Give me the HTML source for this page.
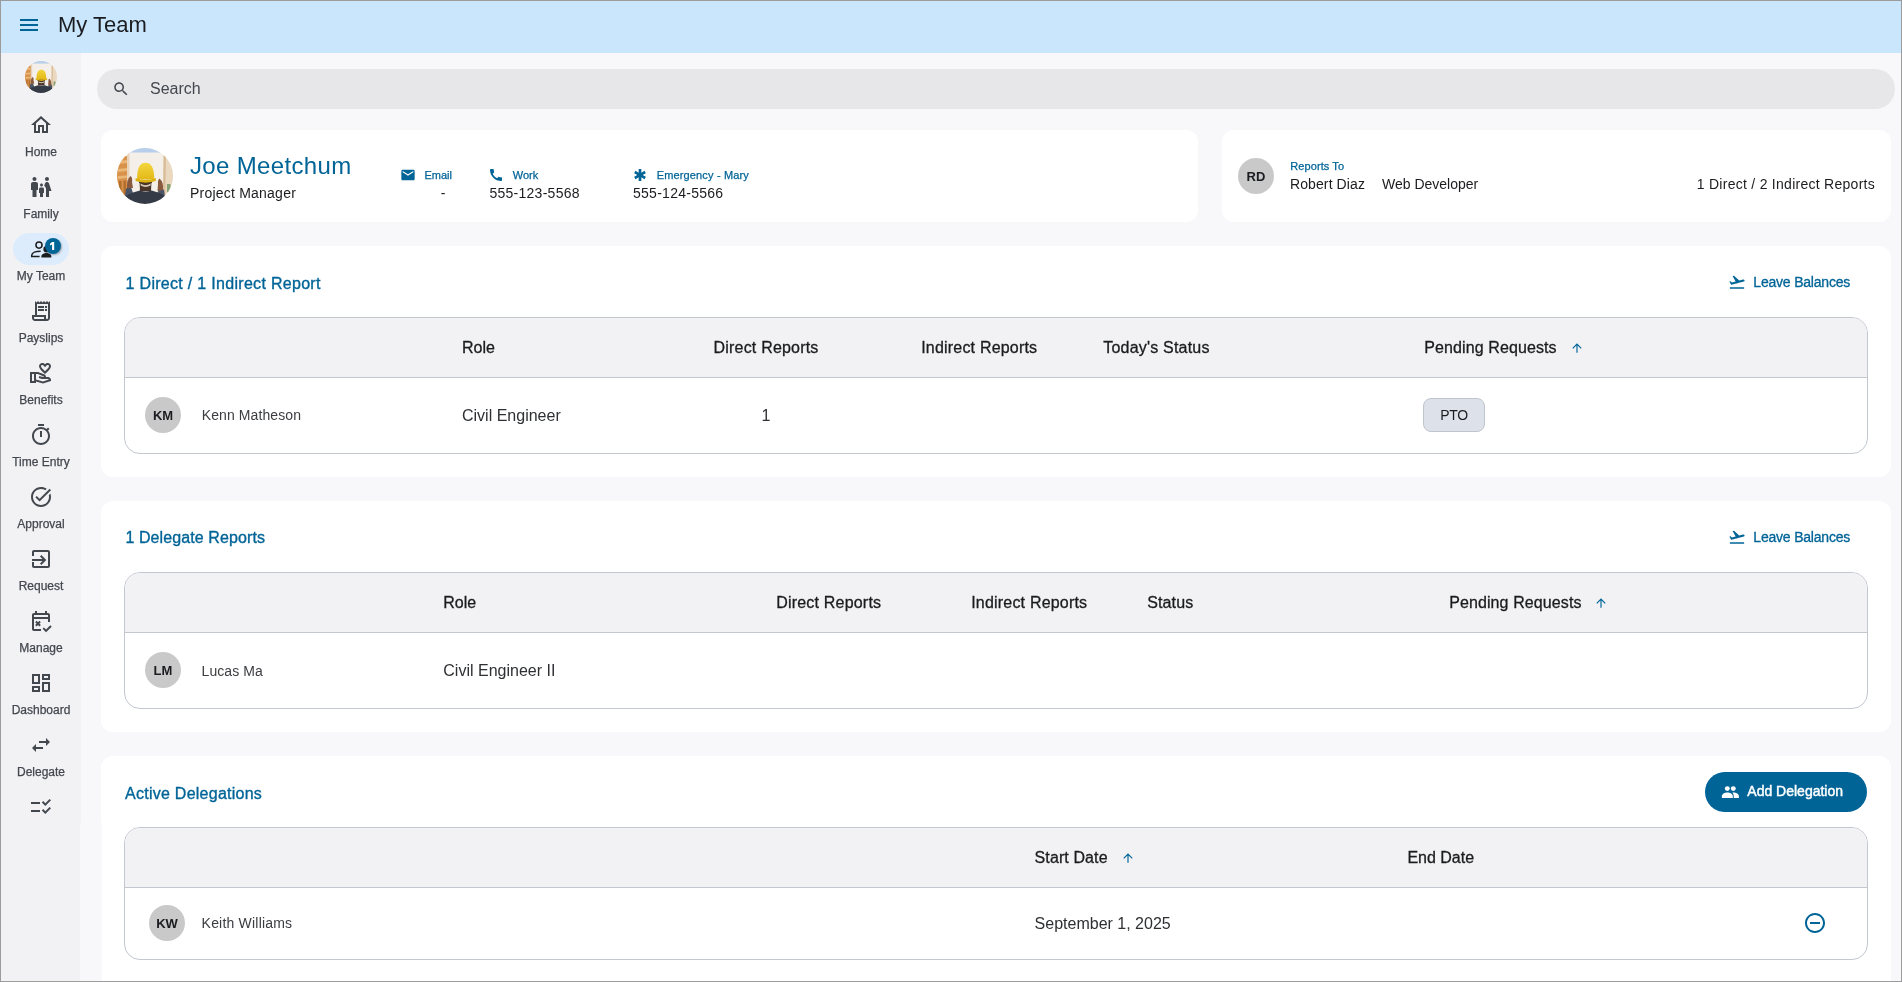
<!DOCTYPE html>
<html><head><meta charset="utf-8"><title>My Team</title>
<style>
html,body{margin:0;padding:0;}
body{width:1902px;height:982px;position:relative;overflow:hidden;background:#fff;font-family:"Liberation Sans",sans-serif;}
.t{position:absolute;white-space:nowrap;line-height:1;}
.av{position:absolute;width:36px;height:36px;border-radius:18px;background:#c9c9c9;color:#1b1c1f;font:bold 13px/37px "Liberation Sans",sans-serif;text-align:center;}
#frame{position:absolute;left:0;top:0;width:1900px;height:980px;border:1px solid #9c9c9c;pointer-events:none;z-index:10;}
</style></head><body>
<div id="root" style="position:absolute;left:0;top:0;width:1902px;height:982px;will-change:transform;">
<div style="position:absolute;left:0px;top:0px;width:1902px;height:53px;background:#c9e6fd;"></div>
<svg style="position:absolute;left:17px;top:13px;" width="24" height="24" viewBox="0 0 24 24"><path fill="#006497" d="M3 18h18v-2H3v2zm0-5h18v-2H3v2zm0-7v2h18V6H3z"/></svg>
<div class="t" style="left:58.00px;top:13.78px;font-size:22px;color:#1b1c1f;">My Team</div>
<div style="position:absolute;left:0px;top:53px;width:81px;height:929px;background:#f2f2f5;"></div>
<svg style="position:absolute;left:25px;top:61px" width="32" height="32" viewBox="0 0 56 56">
<defs><clipPath id="ca"><circle cx="28" cy="28" r="28"/></clipPath>
<linearGradient id="ha" x1="0" y1="0" x2="0" y2="1"><stop offset="0" stop-color="#f4d63e"/><stop offset="1" stop-color="#e3b817"/></linearGradient></defs>
<g clip-path="url(#ca)">
<rect width="56" height="56" fill="#f4efe8"/>
<rect x="0" y="0" width="56" height="4.5" fill="#b7cfea"/>
<path d="M0 9 L10.5 8 L10.5 48 L0 48Z" fill="#d8924a"/>
<path d="M1 13 L10 12 L10 15 L1 16Z M1 21 L10 20 L10 23 L1 24Z M1 28 L10 27.5 L10 30 L1 31Z" fill="#eab777"/>
<path d="M2 33 L4.5 33 L4.5 48 L2 48Z M6.5 32.5 L9 32.5 L9 48 L6.5 48Z" fill="#b26f2e"/>
<path d="M10 5 L12.5 5 L12.5 48 L10 48Z" fill="#e7d3bb"/>
<path d="M48.5 7 L56 9 L56 48 L48.5 48Z" fill="#ead9c0"/>
<path d="M46.5 6 L49 6.5 L48.5 47 L46 47Z" fill="#d9bc98"/>
<path d="M50 36 L53.5 36 L53.5 44 L50 44Z" fill="#86a174"/>
<path d="M7 56 L9 41 Q11 38 14 39 L16 45 L15 56Z" fill="#4a5568"/>
<path d="M49 56 L47 42 Q45 40 42 41 L40 46 L41 56Z" fill="#4a5568"/>
<path d="M10 40 Q9.5 31 13.5 28 Q15.8 29.5 15 34 L16 40Z" fill="#8a5a3e"/>
<path d="M46 42 Q46.8 34 42.5 30.5 Q40.5 32 41 36 L40.5 43Z" fill="#8a5a3e"/>
<path d="M22.5 33 L34.5 33 L34 43 L23 43Z" fill="#4a3328"/>
<path d="M22 32 L35 32 L34.8 35 L22.2 35Z" fill="#2a1f1a"/>
<path d="M23.5 35.5 Q28.6 39 33.8 35.5 L33.6 37.6 Q28.6 40.5 23.7 37.6Z" fill="#d9cbb8"/>
<path d="M20.2 31.5 Q19.6 15 28.6 14.8 Q37.6 15 37.2 31.5Z" fill="url(#ha)"/>
<path d="M18.6 30 Q28.6 34 38.8 30 L38.8 33 Q28.6 36.6 18.6 33Z" fill="#dcb114"/>
<path d="M3 56 Q7 47 16 44.5 L23 42.5 Q28.6 44.5 34.5 42.5 L41 44.5 Q50 47 53 56Z" fill="#343b46"/>
</g></svg>
<svg style="position:absolute;left:29px;top:113px;" width="24" height="24" viewBox="0 0 24 24"><path fill="#43474e" d="M12 5.69l5 4.5V18h-2v-6H9v6H7v-7.81l5-4.5M12 3L2 12h3v8h6v-6h2v6h6v-8h3L12 3z"/></svg>
<div class="t" style="left:-59.00px;width:200px;text-align:center;top:145.84px;font-size:12px;color:#43474e;-webkit-text-stroke:0.25px #43474e;">Home</div>
<svg style="position:absolute;left:29px;top:175px;" width="24" height="24" viewBox="0 0 24 24"><path fill="#43474e" d="M16 4c0-1.11.89-2 2-2s2 .89 2 2-.89 2-2 2-2-.89-2-2zm4 18v-6h2.5l-2.54-7.63C19.68 7.55 18.92 7 18.06 7h-.12c-.86 0-1.63.55-1.9 1.37l-.86 2.58c1.08.6 1.82 1.73 1.82 3.05v8h3zm-7.5-10.5c.83 0 1.5-.67 1.5-1.5s-.67-1.5-1.5-1.5S11 9.17 11 10s.67 1.5 1.5 1.5zM5.5 6c1.11 0 2-.89 2-2s-.89-2-2-2-2 .89-2 2 .89 2 2 2zm2 16v-7H9V9c0-1.1-.9-2-2-2H4c-1.1 0-2 .9-2 2v6h1.5v7h4zm6.5 0v-4h1v-4c0-.82-.68-1.5-1.5-1.5h-2c-.82 0-1.5.68-1.5 1.5v4h1v4h3z"/></svg>
<div class="t" style="left:-59.00px;width:200px;text-align:center;top:207.84px;font-size:12px;color:#43474e;-webkit-text-stroke:0.25px #43474e;">Family</div>
<div style="position:absolute;left:13px;top:233px;width:56px;height:32px;background:#ddecfc;border-radius:16px;"></div>
<svg style="position:absolute;left:25px;top:235px" width="32" height="26" viewBox="25 235 32 26"><g fill="none" stroke="#1b1c1f" stroke-width="1.5"><circle cx="39" cy="245.1" r="3.05"/><path d="M40.6 251.2 C36 251.2 31.7 252.7 31.7 255.4 L31.7 256.6 L39.6 256.6"/></g><g fill="#1b1c1f"><circle cx="46.6" cy="249.3" r="3.2"/><path d="M41.4 257.4 L51.3 257.4 L51.3 256.3 C51.3 254.3 48.7 253 46.4 253 C44.1 253 41.4 254.3 41.4 256.3Z"/></g></svg>
<div class="t" style="left:-59.00px;width:200px;text-align:center;top:269.84px;font-size:12px;color:#43474e;-webkit-text-stroke:0.25px #43474e;">My Team</div>
<svg style="position:absolute;left:29px;top:299px;" width="24" height="24" viewBox="0 0 24 24"><path fill="#43474e" d="M19.5 3.5L18 2l-1.5 1.5L15 2l-1.5 1.5L12 2l-1.5 1.5L9 2 7.5 3.5 6 2v14H3v3c0 1.66 1.34 3 3 3h12c1.66 0 3-1.34 3-3V2l-1.5 1.5zM15 20H6c-.55 0-1-.45-1-1v-1h10v2zm4-1c0 .55-.45 1-1 1s-1-.45-1-1v-3H8V5h11v14zM9 7h6v2H9zm7 0h2v2h-2zm-7 3h6v2H9zm7 0h2v2h-2z"/></svg>
<div class="t" style="left:-59.00px;width:200px;text-align:center;top:331.84px;font-size:12px;color:#43474e;-webkit-text-stroke:0.25px #43474e;">Payslips</div>
<svg style="position:absolute;left:29px;top:361px;" width="24" height="24" viewBox="0 0 24 24"><path fill="#43474e" d="M16 13c3.09-2.81 6-5.44 6-7.7C22 3.45 20.55 2 18.7 2c-1.04 0-2.05.49-2.7 1.25C15.34 2.49 14.34 2 13.3 2 11.45 2 10 3.45 10 5.3c0 2.26 2.91 4.89 6 7.7zm-2.7-9c.44 0 .89.21 1.18.55L16 6.28l1.52-1.73c.29-.34.74-.55 1.18-.55.74 0 1.3.56 1.3 1.3 0 1.12-2.04 3.17-4 4.99-1.96-1.82-4-3.87-4-4.99 0-.74.56-1.3 1.3-1.3zM19 16h-2c0-1.2-.75-2.28-1.87-2.7L8.97 11H1v11h6v-1.44l7 1.94 8-2.5v-1c0-1.66-1.34-3-3-3zM3 20v-7h2v7H3zm10.97.41L7 18.48V13h1.61l5.82 2.17c.34.13.57.46.57.83 0 0-1.99-.05-2.3-.15l-2.38-.79-.63 1.9 2.38.79c.51.17 1.04.26 1.58.26H19c.39 0 .74.23.9.56l-5.93 1.84z"/></svg>
<div class="t" style="left:-59.00px;width:200px;text-align:center;top:393.84px;font-size:12px;color:#43474e;-webkit-text-stroke:0.25px #43474e;">Benefits</div>
<svg style="position:absolute;left:29px;top:423px;" width="24" height="24" viewBox="0 0 24 24"><path fill="#43474e" d="M15 1H9v2h6V1zm-4 13h2V8h-2v6zm8.03-6.61l1.42-1.42c-.43-.51-.9-.99-1.41-1.41l-1.42 1.42C16.07 4.74 14.12 4 12 4c-4.97 0-9 4.03-9 9s4.02 9 9 9 9-4.03 9-9c0-2.12-.74-4.07-1.97-5.61zM12 20c-3.87 0-7-3.13-7-7s3.13-7 7-7 7 3.13 7 7-3.13 7-7 7z"/></svg>
<div class="t" style="left:-59.00px;width:200px;text-align:center;top:455.84px;font-size:12px;color:#43474e;-webkit-text-stroke:0.25px #43474e;">Time Entry</div>
<svg style="position:absolute;left:29px;top:485px;" width="24" height="24" viewBox="0 0 24 24"><path fill="#43474e" d="M22 5.18L10.59 16.6l-4.24-4.24 1.41-1.41 2.83 2.83 10-10L22 5.18zm-2.21 5.04c.13.57.21 1.17.21 1.78 0 4.42-3.58 8-8 8s-8-3.58-8-8 3.58-8 8-8c1.58 0 3.04.46 4.28 1.25l1.44-1.44C16.1 2.67 14.13 2 12 2 6.48 2 2 6.48 2 12s4.48 10 10 10 10-4.48 10-10c0-1.19-.22-2.33-.6-3.39l-1.61 1.61z"/></svg>
<div class="t" style="left:-59.00px;width:200px;text-align:center;top:517.84px;font-size:12px;color:#43474e;-webkit-text-stroke:0.25px #43474e;">Approval</div>
<svg style="position:absolute;left:29px;top:547px;" width="24" height="24" viewBox="0 0 24 24"><path fill="#43474e" d="M19 3H5c-1.11 0-2 .9-2 2v4h2V5h14v14H5v-4H3v4c0 1.1.89 2 2 2h14c1.1 0 2-.9 2-2V5c0-1.1-.9-2-2-2zm-8.01 13.5L12.4 17.9 17.3 13l-4.9-4.9-1.41 1.41L13.47 12H3v2h10.47l-2.48 2.5z"/></svg>
<div class="t" style="left:-59.00px;width:200px;text-align:center;top:579.84px;font-size:12px;color:#43474e;-webkit-text-stroke:0.25px #43474e;">Request</div>
<svg style="position:absolute;left:29px;top:609px;" width="24" height="24" viewBox="0 0 24 24"><path fill="#43474e" d="M19 4h-1V2h-2v2H8V2H6v2H5c-1.11 0-2 .9-2 2v14c0 1.1.89 2 2 2h7v-2H5V10h14v3h2V6c0-1.1-.9-2-2-2zm0 4H5V6h14v2zM7.59 17.41l1.41-1.41 1.41 1.41L11.83 16 10.41 14.59 11.83 13.17 10.41 11.76 9 13.17 7.59 11.76 6.17 13.17 7.59 14.59 6.17 16zM21.3 16.3l-4.24 4.24-2.12-2.12-1.41 1.41 3.53 3.54 5.66-5.66z"/></svg>
<div class="t" style="left:-59.00px;width:200px;text-align:center;top:641.84px;font-size:12px;color:#43474e;-webkit-text-stroke:0.25px #43474e;">Manage</div>
<svg style="position:absolute;left:29px;top:671px;" width="24" height="24" viewBox="0 0 24 24"><path fill="#43474e" d="M19 5v2h-4V5h4M9 5v6H5V5h4m10 8v6h-4v-6h4M9 17v2H5v-2h4M21 3h-8v6h8V3zM11 3H3v10h8V3zm10 8h-8v10h8V11zm-10 4H3v6h8v-6z"/></svg>
<div class="t" style="left:-59.00px;width:200px;text-align:center;top:703.84px;font-size:12px;color:#43474e;-webkit-text-stroke:0.25px #43474e;">Dashboard</div>
<svg style="position:absolute;left:29px;top:733px;" width="24" height="24" viewBox="0 0 24 24"><path fill="#43474e" d="M6.99 11L3 15l3.99 4v-3H14v-2H6.99v-3zM21 9l-3.99-4v3H10v2h7.01v3L21 9z"/></svg>
<div class="t" style="left:-59.00px;width:200px;text-align:center;top:765.84px;font-size:12px;color:#43474e;-webkit-text-stroke:0.25px #43474e;">Delegate</div>
<svg style="position:absolute;left:29px;top:795px;" width="24" height="24" viewBox="0 0 24 24"><path fill="#43474e" d="M11 7H2v2h9V7zm0 8H2v2h9v-2zm5.34-4L12.8 7.46l1.41-1.41 2.12 2.12 4.24-4.24L22 5.34 16.34 11zm0 8l-3.54-3.54 1.41-1.41 2.12 2.12 4.24-4.24L22 13.34 16.34 19z"/></svg>
<div style="position:absolute;left:45px;top:238px;width:16px;height:16px;border-radius:8px;background:#006497;box-shadow:1px 1px 2px rgba(0,0,0,0.3);"></div>
<svg style="position:absolute;left:45px;top:238px" width="16" height="16" viewBox="45 238 16 16"><path fill="#fff" d="M52.1 242 L54.2 242 L54.2 250 L52.1 250 L52.1 244.6 L50 245.4 L50 243.7 Z"/></svg>
<div style="position:absolute;left:81px;top:53px;width:1821px;height:929px;background:#f8f8fb;"></div>
<div style="position:absolute;left:97px;top:69px;width:1798px;height:40px;background:#e7e7ea;border-radius:20px;"></div>
<svg style="position:absolute;left:112px;top:80px;" width="18" height="18" viewBox="0 0 24 24"><path fill="#43474e" d="M15.5 14h-.79l-.28-.27C15.41 12.59 16 11.11 16 9.5 16 5.91 13.09 3 9.5 3S3 5.91 3 9.5 5.91 16 9.5 16c1.61 0 3.09-.59 4.23-1.57l.27.28v.79l5 4.99L20.49 19l-4.99-5zm-6 0C7.01 14 5 11.99 5 9.5S7.01 5 9.5 5 14 7.01 14 9.5 11.99 14 9.5 14z"/></svg>
<div class="t" style="left:150.00px;top:81.06px;font-size:16px;color:#43474e;">Search</div>
<div style="position:absolute;left:101px;top:130px;width:1097px;height:92px;background:#fff;border-radius:12px;"></div>
<svg style="position:absolute;left:117px;top:148px" width="56" height="56" viewBox="0 0 56 56">
<defs><clipPath id="cb"><circle cx="28" cy="28" r="28"/></clipPath>
<linearGradient id="hb" x1="0" y1="0" x2="0" y2="1"><stop offset="0" stop-color="#f4d63e"/><stop offset="1" stop-color="#e3b817"/></linearGradient></defs>
<g clip-path="url(#cb)">
<rect width="56" height="56" fill="#f4efe8"/>
<rect x="0" y="0" width="56" height="4.5" fill="#b7cfea"/>
<path d="M0 9 L10.5 8 L10.5 48 L0 48Z" fill="#d8924a"/>
<path d="M1 13 L10 12 L10 15 L1 16Z M1 21 L10 20 L10 23 L1 24Z M1 28 L10 27.5 L10 30 L1 31Z" fill="#eab777"/>
<path d="M2 33 L4.5 33 L4.5 48 L2 48Z M6.5 32.5 L9 32.5 L9 48 L6.5 48Z" fill="#b26f2e"/>
<path d="M10 5 L12.5 5 L12.5 48 L10 48Z" fill="#e7d3bb"/>
<path d="M48.5 7 L56 9 L56 48 L48.5 48Z" fill="#ead9c0"/>
<path d="M46.5 6 L49 6.5 L48.5 47 L46 47Z" fill="#d9bc98"/>
<path d="M50 36 L53.5 36 L53.5 44 L50 44Z" fill="#86a174"/>
<path d="M7 56 L9 41 Q11 38 14 39 L16 45 L15 56Z" fill="#4a5568"/>
<path d="M49 56 L47 42 Q45 40 42 41 L40 46 L41 56Z" fill="#4a5568"/>
<path d="M10 40 Q9.5 31 13.5 28 Q15.8 29.5 15 34 L16 40Z" fill="#8a5a3e"/>
<path d="M46 42 Q46.8 34 42.5 30.5 Q40.5 32 41 36 L40.5 43Z" fill="#8a5a3e"/>
<path d="M22.5 33 L34.5 33 L34 43 L23 43Z" fill="#4a3328"/>
<path d="M22 32 L35 32 L34.8 35 L22.2 35Z" fill="#2a1f1a"/>
<path d="M23.5 35.5 Q28.6 39 33.8 35.5 L33.6 37.6 Q28.6 40.5 23.7 37.6Z" fill="#d9cbb8"/>
<path d="M20.2 31.5 Q19.6 15 28.6 14.8 Q37.6 15 37.2 31.5Z" fill="url(#hb)"/>
<path d="M18.6 30 Q28.6 34 38.8 30 L38.8 33 Q28.6 36.6 18.6 33Z" fill="#dcb114"/>
<path d="M3 56 Q7 47 16 44.5 L23 42.5 Q28.6 44.5 34.5 42.5 L41 44.5 Q50 47 53 56Z" fill="#343b46"/>
</g></svg>
<div class="t" style="left:190.00px;top:153.68px;font-size:24px;color:#006497;letter-spacing:0.35px;">Joe Meetchum</div>
<div class="t" style="left:190.00px;top:185.85px;font-size:14px;color:#1b1c1f;letter-spacing:0.22px;">Project Manager</div>
<svg style="position:absolute;left:399.6px;top:167px;" width="16" height="16" viewBox="0 0 24 24"><path fill="#006497" d="M20 4H4c-1.1 0-1.99.9-1.99 2L2 18c0 1.1.9 2 2 2h16c1.1 0 2-.9 2-2V6c0-1.1-.9-2-2-2zm0 4l-8 5-8-5V6l8 5 8-5v2z"/></svg>
<div class="t" style="left:424.50px;top:169.69px;font-size:11px;color:#006497;-webkit-text-stroke:0.25px #006497;">Email</div>
<div class="t" style="left:343.00px;width:200px;text-align:center;top:185.75px;font-size:14px;color:#1b1c1f;">-</div>
<svg style="position:absolute;left:488px;top:166.5px;" width="16" height="16" viewBox="0 0 24 24"><path fill="#006497" d="M20.01 15.38c-1.23 0-2.42-.2-3.53-.56-.35-.12-.74-.03-1.01.24l-1.57 1.97c-2.83-1.35-5.48-3.9-6.89-6.83l1.95-1.66c.27-.28.35-.67.24-1.02-.37-1.11-.56-2.3-.56-3.53 0-.54-.45-.99-.99-.99H4.19C3.65 3 3 3.24 3 3.99 3 13.28 10.73 21 20.01 21c.71 0 .99-.63.99-1.18v-3.45c0-.54-.45-.99-.99-.99z"/></svg>
<div class="t" style="left:512.80px;top:169.69px;font-size:11px;color:#006497;-webkit-text-stroke:0.25px #006497;">Work</div>
<div class="t" style="left:489.40px;top:185.75px;font-size:14px;color:#1b1c1f;letter-spacing:0.27px;">555-123-5568</div>
<svg style="position:absolute;left:632px;top:167px;" width="16" height="16" viewBox="0 0 24 24"><path fill="#006497" d="M20.79 9.23l-2-3.46L14 8.54V3h-4v5.54L5.21 5.77l-2 3.46L8 12l-4.79 2.77 2 3.46L10 15.46V21h4v-5.54l4.79 2.77 2-3.46L16 12z"/></svg>
<div class="t" style="left:656.70px;top:169.69px;font-size:11px;color:#006497;letter-spacing:0.15px;-webkit-text-stroke:0.25px #006497;">Emergency - Mary</div>
<div class="t" style="left:633.00px;top:186.15px;font-size:14px;color:#1b1c1f;letter-spacing:0.27px;">555-124-5566</div>
<div style="position:absolute;left:1222px;top:130px;width:669px;height:92px;background:#fff;border-radius:12px;"></div>
<div class="av" style="left:1238px;top:158px">RD</div>
<div class="t" style="left:1290.20px;top:161.19px;font-size:11px;color:#006497;letter-spacing:0.1px;-webkit-text-stroke:0.25px #006497;">Reports To</div>
<div class="t" style="left:1290.00px;top:177.15px;font-size:14px;color:#1b1c1f;letter-spacing:0.1px;">Robert Diaz</div>
<div class="t" style="left:1382.00px;top:177.15px;font-size:14px;color:#1b1c1f;">Web Developer</div>
<div class="t" style="right:27.00px;top:177.15px;font-size:14px;color:#1b1c1f;letter-spacing:0.27px;">1 Direct / 2 Indirect Reports</div>
<div style="position:absolute;left:101px;top:246px;width:1790px;height:231px;background:#fff;border-radius:12px;"></div>
<div class="t" style="left:125.60px;top:275.56px;font-size:16px;color:#006497;letter-spacing:0.3px;-webkit-text-stroke:0.35px #006497;">1 Direct / 1 Indirect Report</div>
<svg style="position:absolute;left:1727.5px;top:273.2px;" width="18" height="18" viewBox="0 0 24 24"><path fill="#006497" d="M2.5 19h19v2h-19v-2zm19.57-9.36c-.21-.8-1.04-1.28-1.84-1.06L14.92 10l-6.9-6.43-1.93.51 4.14 7.17-4.97 1.33-1.97-1.54-1.45.39 2.59 4.49s7.12-1.9 16.57-4.43c.81-.23 1.28-1.05 1.07-1.85z"/></svg>
<div class="t" style="left:1753.30px;top:274.95px;font-size:14px;color:#006497;letter-spacing:-0.2px;-webkit-text-stroke:0.3px #006497;">Leave Balances</div>
<div style="position:absolute;left:124px;top:317px;width:1742px;height:135px;border:1px solid #c2c7d0;border-radius:16px;background:#fff;overflow:hidden;"></div>
<div style="position:absolute;left:125px;top:318px;width:1742px;height:59px;background:#f2f2f5;border-radius:15px 15px 0 0;border-bottom:1px solid #c2c7d0;"></div>
<div class="t" style="left:462.00px;top:339.96px;font-size:16px;color:#1b1c1f;-webkit-text-stroke:0.3px #1b1c1f;">Role</div>
<div class="t" style="left:713.50px;top:339.96px;font-size:16px;color:#1b1c1f;letter-spacing:0.2px;-webkit-text-stroke:0.3px #1b1c1f;">Direct Reports</div>
<div class="t" style="left:921.20px;top:339.96px;font-size:16px;color:#1b1c1f;letter-spacing:0.2px;-webkit-text-stroke:0.3px #1b1c1f;">Indirect Reports</div>
<div class="t" style="left:1103.30px;top:339.96px;font-size:16px;color:#1b1c1f;letter-spacing:0.2px;-webkit-text-stroke:0.3px #1b1c1f;">Today's Status</div>
<div class="t" style="left:1424.30px;top:339.96px;font-size:16px;color:#1b1c1f;letter-spacing:0.1px;-webkit-text-stroke:0.3px #1b1c1f;">Pending Requests</div>
<svg style="position:absolute;left:1569.5px;top:341px;" width="14" height="14" viewBox="0 0 24 24"><path fill="#006497" d="M4 12l1.41 1.41L11 7.83V20h2V7.83l5.58 5.59L20 12l-8-8-8 8z"/></svg>
<div class="av" style="left:145px;top:397px">KM</div>
<div class="t" style="left:201.70px;top:408.15px;font-size:14px;color:#3b3d40;letter-spacing:0.1px;">Kenn Matheson</div>
<div class="t" style="left:462.00px;top:407.96px;font-size:16px;color:#2e3033;">Civil Engineer</div>
<div class="t" style="left:666.00px;width:200px;text-align:center;top:407.96px;font-size:16px;color:#2e3033;">1</div>
<div style="position:absolute;left:1423px;top:398px;width:60px;height:32px;border:1px solid #bfc5cd;background:#dde2ea;border-radius:8px;"></div>
<div class="t" style="left:1354.00px;width:200px;text-align:center;top:407.75px;font-size:14px;color:#1b1c1f;letter-spacing:-0.3px;">PTO</div>
<div style="position:absolute;left:101px;top:501px;width:1790px;height:231px;background:#fff;border-radius:12px;"></div>
<div class="t" style="left:125.40px;top:530.16px;font-size:16px;color:#006497;letter-spacing:0.1px;-webkit-text-stroke:0.35px #006497;">1 Delegate Reports</div>
<svg style="position:absolute;left:1727.5px;top:528.2px;" width="18" height="18" viewBox="0 0 24 24"><path fill="#006497" d="M2.5 19h19v2h-19v-2zm19.57-9.36c-.21-.8-1.04-1.28-1.84-1.06L14.92 10l-6.9-6.43-1.93.51 4.14 7.17-4.97 1.33-1.97-1.54-1.45.39 2.59 4.49s7.12-1.9 16.57-4.43c.81-.23 1.28-1.05 1.07-1.85z"/></svg>
<div class="t" style="left:1753.30px;top:529.95px;font-size:14px;color:#006497;letter-spacing:-0.2px;-webkit-text-stroke:0.3px #006497;">Leave Balances</div>
<div style="position:absolute;left:124px;top:572px;width:1742px;height:135px;border:1px solid #c2c7d0;border-radius:16px;background:#fff;overflow:hidden;"></div>
<div style="position:absolute;left:125px;top:573px;width:1742px;height:59px;background:#f2f2f5;border-radius:15px 15px 0 0;border-bottom:1px solid #c2c7d0;"></div>
<div class="t" style="left:443.30px;top:595.16px;font-size:16px;color:#1b1c1f;-webkit-text-stroke:0.3px #1b1c1f;">Role</div>
<div class="t" style="left:776.20px;top:595.16px;font-size:16px;color:#1b1c1f;letter-spacing:0.2px;-webkit-text-stroke:0.3px #1b1c1f;">Direct Reports</div>
<div class="t" style="left:971.20px;top:595.16px;font-size:16px;color:#1b1c1f;letter-spacing:0.2px;-webkit-text-stroke:0.3px #1b1c1f;">Indirect Reports</div>
<div class="t" style="left:1147.30px;top:595.16px;font-size:16px;color:#1b1c1f;letter-spacing:0.1px;-webkit-text-stroke:0.3px #1b1c1f;">Status</div>
<div class="t" style="left:1449.20px;top:595.16px;font-size:16px;color:#1b1c1f;letter-spacing:0.1px;-webkit-text-stroke:0.3px #1b1c1f;">Pending Requests</div>
<svg style="position:absolute;left:1594.3px;top:596px;" width="14" height="14" viewBox="0 0 24 24"><path fill="#006497" d="M4 12l1.41 1.41L11 7.83V20h2V7.83l5.58 5.59L20 12l-8-8-8 8z"/></svg>
<div class="av" style="left:145px;top:652px">LM</div>
<div class="t" style="left:201.50px;top:663.65px;font-size:14px;color:#3b3d40;letter-spacing:0.1px;">Lucas Ma</div>
<div class="t" style="left:443.30px;top:663.46px;font-size:16px;color:#2e3033;">Civil Engineer II</div>
<div style="position:absolute;left:101px;top:756px;width:1790px;height:260px;background:#fff;border-radius:12px;"></div>
<div style="position:absolute;left:80px;top:823px;width:1px;height:159px;background:#f8f8fb;"></div>
<div style="position:absolute;left:101px;top:823px;width:1px;height:159px;background:#f8f8fb;"></div>
<div class="t" style="left:125.10px;top:785.56px;font-size:16px;color:#006497;letter-spacing:0.25px;-webkit-text-stroke:0.35px #006497;">Active Delegations</div>
<div style="position:absolute;left:1705px;top:772px;width:162px;height:40px;background:#006497;border-radius:20px;"></div>
<svg style="position:absolute;left:1719px;top:783px" width="22" height="18" viewBox="1719 783 22 18"><g fill="#fff"><circle cx="1727.3" cy="788.6" r="2.45"/><circle cx="1733.3" cy="788.6" r="2.45"/><path d="M1721.9 797.9 V796 C1721.9 793.9 1724.7 792.4 1727.35 792.4 C1730 792.4 1732.8 793.9 1732.8 796 V797.9Z"/><path d="M1733.7 797.9 V796 C1733.7 794.6 1733.1 793.5 1732.3 792.8 C1732.7 792.5 1733 792.4 1733.4 792.4 C1736.1 792.4 1738.9 793.9 1738.9 796 V797.9Z"/></g></svg>
<div class="t" style="left:1747.30px;top:784.45px;font-size:14px;color:#fff;-webkit-text-stroke:0.45px #fff;">Add Delegation</div>
<div style="position:absolute;left:124px;top:827px;width:1742px;height:131px;border:1px solid #c2c7d0;border-radius:16px;background:#fff;overflow:hidden;"></div>
<div style="position:absolute;left:125px;top:828px;width:1742px;height:59px;background:#f2f2f5;border-radius:15px 15px 0 0;border-bottom:1px solid #c2c7d0;"></div>
<div class="t" style="left:1034.60px;top:850.06px;font-size:16px;color:#1b1c1f;letter-spacing:0.1px;-webkit-text-stroke:0.3px #1b1c1f;">Start Date</div>
<svg style="position:absolute;left:1121px;top:851px;" width="14" height="14" viewBox="0 0 24 24"><path fill="#006497" d="M4 12l1.41 1.41L11 7.83V20h2V7.83l5.58 5.59L20 12l-8-8-8 8z"/></svg>
<div class="t" style="left:1407.40px;top:850.06px;font-size:16px;color:#1b1c1f;-webkit-text-stroke:0.3px #1b1c1f;">End Date</div>
<div class="av" style="left:149px;top:905px">KW</div>
<div class="t" style="left:201.60px;top:916.15px;font-size:14px;color:#3b3d40;letter-spacing:0.2px;">Keith Williams</div>
<div class="t" style="left:1034.60px;top:916.26px;font-size:16px;color:#2e3033;">September 1, 2025</div>
<svg style="position:absolute;left:1803px;top:911px;" width="24" height="24" viewBox="0 0 24 24"><path fill="#006497" d="M7 11v2h10v-2H7zm5-9C6.48 2 2 6.48 2 12s4.48 10 10 10 10-4.48 10-10S17.52 2 12 2zm0 18c-4.41 0-8-3.59-8-8s3.59-8 8-8 8 3.59 8 8-3.59 8-8 8z"/></svg>
<div id="frame"></div>
</div>
</body></html>
